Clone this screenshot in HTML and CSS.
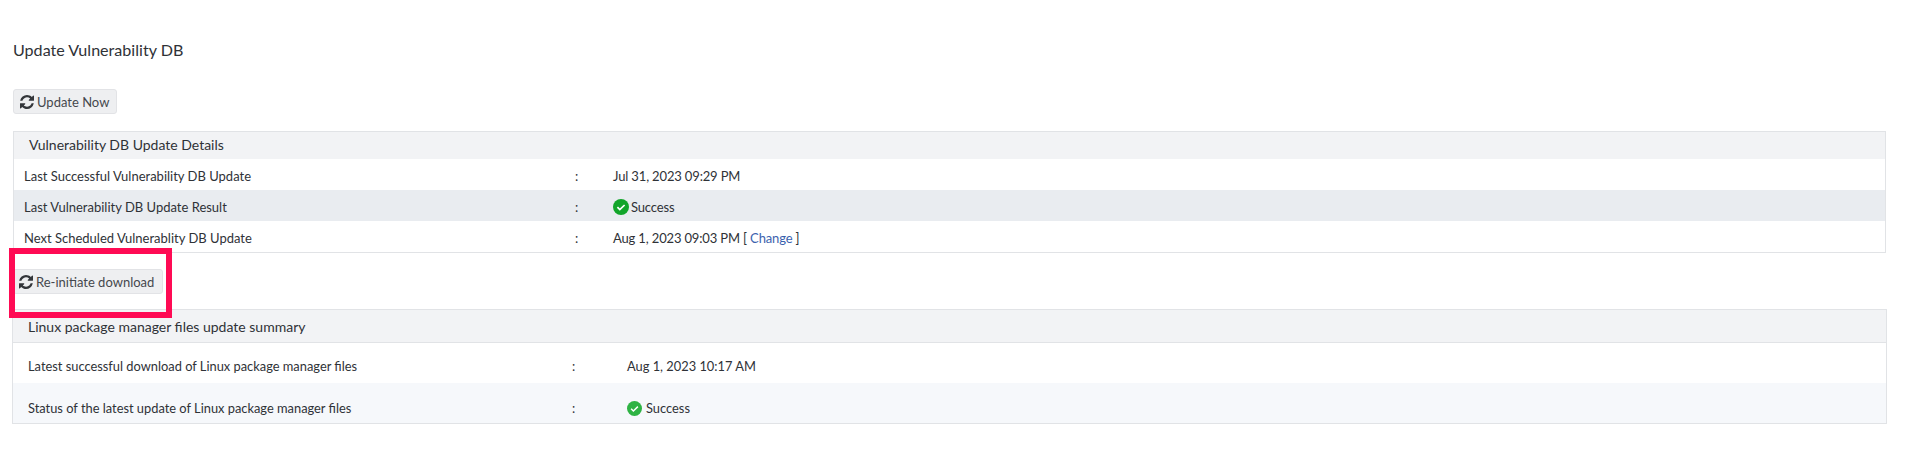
FILE: index.html
```html
<!DOCTYPE html>
<html lang="en">
<head>
  <meta charset="UTF-8">
  <title>Update Vulnerability DB</title>
  <link rel="stylesheet" href="styles.css">
</head>
<body>
  <svg class="icon-defs" width="0" height="0">
    <symbol id="refresh" viewBox="128 128 1536 1536">
      <path d="M1639 1056q0 5-1 7-64 268-268 434.5t-478 166.5q-146 0-282.5-55t-243.5-157l-129 129q-19 19-45 19t-45-19-19-45v-448q0-26 19-45t45-19h448q26 0 45 19t19 45-19 45l-137 137q71 66 161 102t187 36q134 0 250-65t186-179q11-17 53-117 8-23 30-23h192q13 0 22.5 9.5t9.5 22.5zm25-800v448q0 26-19 45t-45 19h-448q-26 0-45-19t-19-45 19-45l138-138q-148-137-349-137-134 0-250 65t-186 179q-11 17-53 117-8 23-30 23h-199q-13 0-22.5-9.5t-9.5-22.5v-7q65-268 270-434.5t480-166.5q146 0 284 55.5t245 156.5l130-129q19-19 45-19t45 19 19 45z"/>
    </symbol>
  </svg>

  <h1 class="page-title">Update Vulnerability DB</h1>

  <button class="btn btn-update"><svg class="refresh"><use href="#refresh"/></svg><span>Update Now</span></button>

  <!-- Vulnerability DB details -->
  <div class="panel details">
    <div class="panel-head">Vulnerability DB Update Details</div>
    <div class="row">
      <span class="label">Last Successful Vulnerability DB Update</span>
      <span class="colon">:</span>
      <span class="value">Jul 31, 2023 09:29 PM</span>
    </div>
    <div class="row shaded">
      <span class="label">Last Vulnerability DB Update Result</span>
      <span class="colon">:</span>
      <span class="value status"><svg class="check" viewBox="0 0 16 16"><circle cx="8" cy="8" r="8" fill="#12a52a"/><path d="M4.4 8.2l2.4 2.4 4.8-4.6" fill="none" stroke="#fff" stroke-width="1.7"/></svg><span>Success</span></span>
    </div>
    <div class="row">
      <span class="label">Next Scheduled Vulnerablity DB Update</span>
      <span class="colon">:</span>
      <span class="value">Aug 1, 2023 09:03 PM [ <a href="#">Change</a> ]</span>
    </div>
  </div>

  <div class="reinitiate">
    <button class="btn btn-reinit"><svg class="refresh"><use href="#refresh"/></svg><span>Re-initiate download</span></button>
    <div class="highlight"></div>
  </div>

  <!-- Linux package manager summary -->
  <div class="panel summary">
    <div class="panel-head">Linux package manager files update summary</div>
    <div class="row">
      <span class="label">Latest successful download of Linux package manager files</span>
      <span class="colon">:</span>
      <span class="value">Aug 1, 2023 10:17 AM</span>
    </div>
    <div class="row shaded">
      <span class="label">Status of the latest update of Linux package manager files</span>
      <span class="colon">:</span>
      <span class="value status"><svg class="check" viewBox="0 0 16 16"><circle cx="8" cy="8" r="8" fill="#2fb344"/><path d="M4.4 8.2l2.4 2.4 4.8-4.6" fill="none" stroke="#fff" stroke-width="1.5"/></svg><span>Success</span></span>
    </div>
  </div>
</body>
</html>
```

FILE: styles.css
```css
* { box-sizing: border-box; }
body {
  margin: 0;
  height: 475px;
  overflow: hidden;
  padding: 39px 21px 0 13px;
  background: #fff;
  font-family: 'Lato', sans-serif;
  font-size: 12.85px;
  color: #2f3237;
}
.icon-defs { position: absolute; }
.page-title {
  margin: 0 0 29px;
  height: 21px;
  line-height: 21px;
  font-size: 16.1px;
  font-weight: 400;
}
.btn {
  display: flex;
  align-items: center;
  height: 25px;
  padding: 0 0 0 6px;
  background: #eeeff1;
  border: 1px solid #e2e3e6;
  border-radius: 3px;
  font-family: inherit;
  font-size: 13px;
  white-space: nowrap;
  color: #45484d;
}
.btn-update {
  width: 104px;
  margin-bottom: 17px;
}
.refresh {
  width: 14px;
  height: 14px;
  margin-right: 3px;
  fill: #33363a;
}
.panel {
  border: 1px solid #e1e3e6;
}
.panel a {
  color: #3b62ae;
  text-decoration: none;
}
.panel-head {
  display: flex;
  align-items: center;
  background: #f2f3f5;
  font-size: 14px;
}
.row {
  display: flex;
  align-items: center;
}
.details { font-size: 13px; }
.details .panel-head {
  height: 27px;
  padding: 0 0 3px 15px;
}
.details .row {
  height: 31px;
  padding: 2px 0 0 10px;
}
.details .shaded { background: #e9ecf0; }
.details .label { width: 551px; }
.details .colon { width: 38px; }
.details .value { letter-spacing: -0.15px; }
.summary {
  margin: 0 -1px;
}
.summary .panel-head {
  height: 33px;
  padding-left: 15px;
  border-bottom: 1px solid #e1e3e6;
}
.summary .row {
  height: 40px;
  padding: 6px 0 0 15px;
}
.summary .shaded {
  padding-top: 10px;
  background: #f6f8fb;
}
.summary .label { width: 544px; }
.summary .colon { width: 55px; }
.status {
  display: flex;
  align-items: center;
}
.check {
  width: 16px;
  height: 16px;
  margin-right: 2px;
}
.summary .check {
  width: 15px;
  height: 15px;
  margin-right: 4px;
}
.reinitiate {
  position: relative;
  height: 56px;
  padding-top: 16px;
}
.btn-reinit {
  width: 150px;
  padding-left: 5px;
}
/* red annotation box drawn over the screenshot */
.highlight {
  position: absolute;
  left: -4px;
  top: -5px;
  width: 163px;
  height: 70px;
  border: 6px solid #ff0a54;
}
```
